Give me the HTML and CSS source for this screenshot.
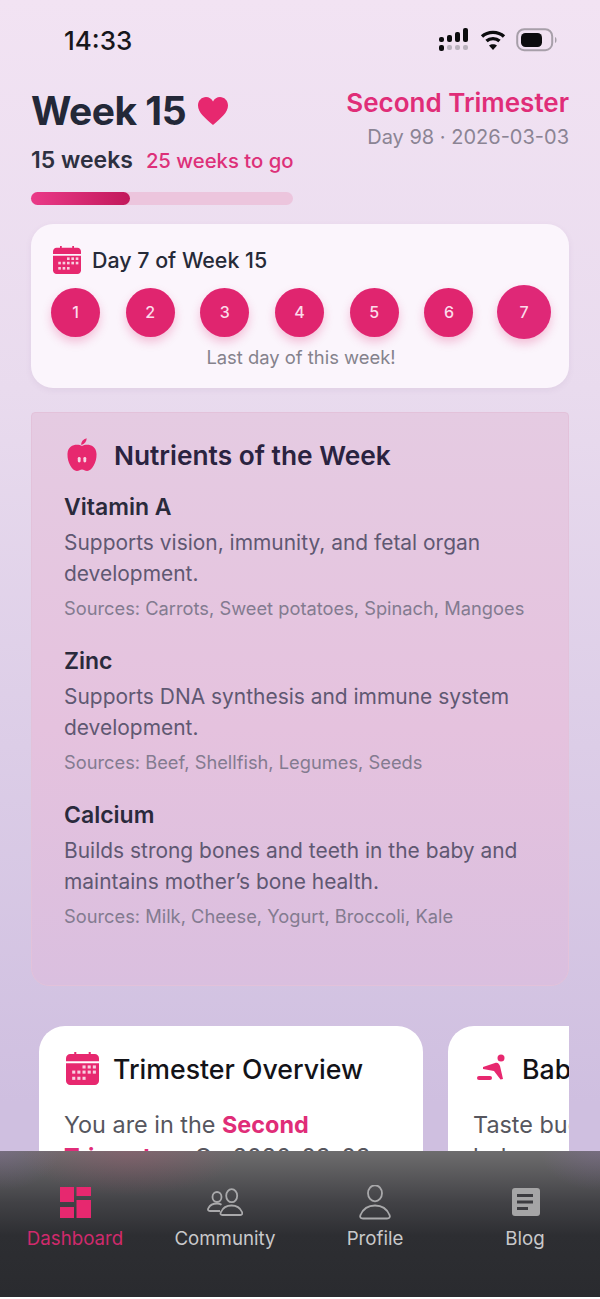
FILE: index.html
```html
<!DOCTYPE html>
<html lang="en">
<head>
    <meta charset="UTF-8">
    <meta name="viewport" content="width=device-width, initial-scale=1.0">
    <title>Dashboard</title>
    <link rel="stylesheet" href="styles.css">
</head>
<body>
    <div class="screen">
        <div class="status-bar">
            <span class="status-time">14:33</span>
            <div class="status-icons">
                <svg width="32" height="24" viewBox="0 0 32 24">
                    <g fill="#0c0c0e">
                        <rect x="1" y="9" width="5" height="5" rx="2"/>
                        <rect x="9" y="7" width="5" height="7" rx="2"/>
                        <rect x="17" y="4" width="5" height="10" rx="2"/>
                        <rect x="25" y="0" width="5" height="14" rx="2"/>
                        <rect x="1" y="17" width="5" height="6" rx="2"/>
                    </g>
                    <g fill="#b9b1bd">
                        <rect x="9" y="17" width="5" height="5" rx="2"/>
                        <rect x="17" y="17" width="5" height="5" rx="2"/>
                        <rect x="25" y="17" width="5" height="5" rx="2"/>
                    </g>
                </svg>
                <svg width="26" height="22" viewBox="0 0 26 22" fill="none" stroke="#0c0c0e" stroke-width="3.4">
                    <path d="M2 7.500C8 2 18 2 24 7.500"/>
                    <path d="M6.500 12C10 8.800 16 8.800 19.500 12"/>
                    <path d="M13 21l-4-4.500c2.200-1.700 5.800-1.700 8 0z" fill="#0c0c0e" stroke="none"/>
                </svg>
                <svg width="42" height="24" viewBox="0 0 42 24" fill="none">
                    <rect x="1.200" y="1.200" width="35" height="21" rx="7" stroke="#a79fa9" stroke-width="2"/>
                    <rect x="5" y="5" width="21" height="14" rx="4.500" fill="#0c0c0e"/>
                    <path d="M39 9c2 .6 2 5.400 0 6z" fill="#a79fa9"/>
                </svg>
            </div>
        </div>

        <main class="content">
            <header class="week-header">
                <div class="week-left">
                    <h1 class="week-title">Week 15
                        <svg class="week-heart" width="32" height="32" viewBox="0 0 32 32">
                            <path d="M16 30C8 23 1 17.500 1 10.500 1 5.500 4.800 2 9 2c3 0 5.500 1.500 7 4.500C17.500 3.500 20 2 23 2c4.200 0 8 3.500 8 8.500C31 17.500 24 23 16 30z" fill="#e7286f"/>
                        </svg>
                    </h1>
                    <div class="week-counts">
                        <span class="weeks-done">15 weeks</span>
                        <span class="weeks-left">25 weeks to go</span>
                    </div>
                    <div class="progress-track">
                        <div class="progress-fill"></div>
                    </div>
                </div>
                <div class="week-right">
                    <div class="trimester-name">Second Trimester</div>
                    <div class="trimester-date">Day 98 · 2026-03-03</div>
                </div>
            </header>

            <section class="day-card">
                <div class="day-heading">
                    <svg class="calendar-icon" width="28" height="28" viewBox="0 0 32 32">
                        <use href="#calendar"/>
                    </svg>
                    <span>Day 7 of Week 15</span>
                </div>
                <div class="day-row">
                    <span class="day-dot">1</span>
                    <span class="day-dot">2</span>
                    <span class="day-dot">3</span>
                    <span class="day-dot">4</span>
                    <span class="day-dot">5</span>
                    <span class="day-dot">6</span>
                    <span class="day-dot day-current">7</span>
                </div>
                <p class="day-note">Last day of this week!</p>
            </section>

            <section class="nutrients-card">
                <div class="nutrients-heading">
                    <svg width="30" height="36" viewBox="0 0 32 38">
                        <path d="M15 8c0-3 2-6 6-7 0 3-2 6-5 7z" fill="#e7286f"/>
                        <path d="M16 9.500C20 7 31 7 31.500 18c.3 9-5 18-10 18-2.500 0-3.500-1.500-5.500-1.500S13 36 10.500 36c-5 0-10.300-9-10-18C1 7 12 7 16 9.500z" fill="#e7286f"/>
                        <rect x="11.500" y="21" width="3" height="6" rx="1.500" fill="#f6d5e4"/>
                        <rect x="17.500" y="21" width="3" height="6" rx="1.500" fill="#f6d5e4"/>
                    </svg>
                    <h2>Nutrients of the Week</h2>
                </div>
                <div class="nutrient">
                    <h3>Vitamin A</h3>
                    <p class="nutrient-desc">Supports vision, immunity, and fetal organ development.</p>
                    <p class="nutrient-src">Sources: Carrots, Sweet potatoes, Spinach, Mangoes</p>
                </div>
                <div class="nutrient">
                    <h3>Zinc</h3>
                    <p class="nutrient-desc">Supports DNA synthesis and immune system development.</p>
                    <p class="nutrient-src">Sources: Beef, Shellfish, Legumes, Seeds</p>
                </div>
                <div class="nutrient">
                    <h3>Calcium</h3>
                    <p class="nutrient-desc">Builds strong bones and teeth in the baby and maintains mother’s bone health.</p>
                    <p class="nutrient-src">Sources: Milk, Cheese, Yogurt, Broccoli, Kale</p>
                </div>
            </section>

            <div class="info-scroller">
                <article class="info-card">
                    <div class="info-heading">
                        <svg width="33" height="33" viewBox="0 0 32 32"><use href="#calendar"/></svg>
                        <h2>Trimester Overview</h2>
                    </div>
                    <p class="info-text">You are in the <strong>Second Trimester</strong>.&nbsp; On 2026-03-03</p>
                </article>
                <article class="info-card">
                    <div class="info-heading">
                        <svg width="33" height="33" viewBox="0 0 33 33">
                            <circle cx="26" cy="6" r="3.500" fill="#e7286f"/>
                            <path d="M8 15l12-4c3-1 4 1 5 3l3 13-2.500.5L19 19 8 17z" fill="#e7286f"/>
                            <rect x="2" y="24" width="15" height="4" rx="2" fill="#e7286f"/>
                        </svg>
                        <h2>Baby Development</h2>
                    </div>
                    <p class="info-text">Taste buds are forming and baby can sense light.</p>
                </article>
            </div>
        </main>

        <nav class="tab-bar">
            <div class="tab tab-active">
                <svg width="36" height="36" viewBox="0 0 36 36" fill="#e7286f">
                    <rect x="3" y="2" width="14" height="15"/>
                    <rect x="3" y="22" width="14" height="11"/>
                    <rect x="19.500" y="2" width="14.500" height="9"/>
                    <rect x="19.500" y="15" width="14.500" height="18"/>
                </svg>
                <span>Dashboard</span>
            </div>
            <div class="tab">
                <svg width="36" height="36" viewBox="0 0 36 36" fill="none" stroke="#a9a9ab" stroke-width="1.800">
                    <ellipse cx="10" cy="12" rx="4.500" ry="5"/>
                    <ellipse cx="24.700" cy="10.700" rx="5.500" ry="6.500"/>
                    <path d="M13 26H3c-2 0-2.500-1.500-1.500-3C3 20 6 18.500 10 18.500c2 0 3.500.5 4.500 1.200"/>
                    <path d="M15.500 30c-2 0-2.500-1.500-1.500-3 2-4.500 6-6.500 10.500-6.500S33 22.500 35 27c.7 1.500 0 3-1.500 3z"/>
                </svg>
                <span>Community</span>
            </div>
            <div class="tab">
                <svg width="36" height="36" viewBox="0 0 36 36" fill="none" stroke="#a9a9ab" stroke-width="1.800">
                    <ellipse cx="18" cy="8.300" rx="7" ry="8"/>
                    <path d="M6 33.500c-2.500 0-3.500-1.500-2.500-3.500C6 24 11.500 20.500 18 20.500S30 24 32.500 30c1 2 0 3.500-2.500 3.500z"/>
                </svg>
                <span>Profile</span>
            </div>
            <div class="tab">
                <svg width="36" height="36" viewBox="0 0 36 36">
                    <rect x="5" y="3" width="28" height="28" rx="3" fill="#a5a5a6"/>
                    <rect x="10" y="9" width="16" height="3" fill="#3c3c40"/>
                    <rect x="10" y="15.500" width="16" height="3" fill="#3c3c40"/>
                    <rect x="10" y="22" width="11" height="3" fill="#3c3c40"/>
                </svg>
                <span>Blog</span>
            </div>
        </nav>
    </div>

    <svg class="icon-defs" width="0" height="0">
        <symbol id="calendar" viewBox="0 0 32 32">
            <path d="M8 0h2v4H8zM22 0h2v4h-2z" fill="#e7286f"/>
            <path d="M4 2h24c2 0 4 2 4 4v3H0V6c0-2 2-4 4-4z" fill="#e7286f"/>
            <path d="M0 11h32v17c0 2-2 4-4 4H4c-2 0-4-2-4-4z" fill="#e7286f"/>
            <g fill="#f8cfe0">
                <rect x="16" y="13" width="3" height="3"/><rect x="21" y="13" width="3" height="3"/><rect x="26" y="13" width="3" height="3"/>
                <rect x="6" y="18" width="3" height="3"/><rect x="11" y="18" width="3" height="3"/><rect x="16" y="18" width="3" height="3"/><rect x="21" y="18" width="3" height="3"/><rect x="26" y="18" width="3" height="3"/>
                <rect x="6" y="24" width="3" height="3"/><rect x="11" y="24" width="3" height="3"/><rect x="16" y="24" width="3" height="3"/>
            </g>
        </symbol>
    </svg>
</body>
</html>
```

FILE: styles.css
```css
* {
    box-sizing: border-box;
}
html, body {
    margin: 0;
    height: 100%;
}
body {
    font-family: Inter, "Liberation Sans", sans-serif;
    background-color: #fff;
    overflow: hidden;
}
h1, h2, h3, p {
    margin: 0;
}
.icon-defs {
    position: absolute;
}
.screen {
    display: flex;
    flex-direction: column;
    height: 1297px;
    background: linear-gradient(#f2e3f3, #e9dbee 30%, #cfbfe0 85%);
}

/* status bar */
.status-bar {
    display: flex;
    justify-content: space-between;
    align-items: center;
    height: 80px;
    padding: 0 42px 0 64px;
    flex-shrink: 0;
}
.status-time {
    font-size: 26px;
    font-weight: 500;
    color: #17171b;
}
.status-icons {
    display: flex;
    align-items: center;
    gap: 10px;
}

/* main content */
.content {
    flex: 1;
    min-height: 0;
    overflow: hidden;
    padding: 0 31px;
}
.week-header {
    display: flex;
    justify-content: space-between;
    height: 144px;
}
.week-left {
    width: 262px;
}
.week-title {
    display: flex;
    align-items: center;
    gap: 11px;
    margin-top: 9px;
    font-size: 39px;
    line-height: 44px;
    font-weight: 700;
    letter-spacing: -0.5px;
    color: #232838;
}
.week-counts {
    display: flex;
    align-items: baseline;
    gap: 13px;
    margin-top: 13px;
    white-space: nowrap;
}
.weeks-done {
    font-size: 23px;
    font-weight: 600;
    color: #2d3040;
}
.weeks-left {
    font-size: 20.3px;
    font-weight: 500;
    color: #dd3079;
}
.progress-track {
    height: 13px;
    margin-top: 18px;
    border-radius: 7px;
    background-color: #ecc5dd;
}
.progress-fill {
    width: 99px;
    height: 100%;
    border-radius: 7px;
    background: linear-gradient(90deg, #ea3a88, #c2185b);
}
.week-right {
    text-align: right;
}
.trimester-name {
    margin-top: 7px;
    font-size: 26px;
    font-weight: 600;
    color: #e02d78;
}
.trimester-date {
    margin-top: 7px;
    font-size: 20px;
    color: #8b8494;
}

/* day card */
.day-card {
    height: 164px;
    padding: 22px 18px 0 20px;
    border-radius: 22px;
    background-color: #fbf5fc;
    box-shadow: 0 2px 6px rgba(120, 80, 130, 0.08);
}
.day-heading {
    display: flex;
    align-items: center;
    gap: 11px;
    font-size: 21.4px;
    font-weight: 500;
    color: #262a38;
}
.calendar-icon {
    margin-left: 2px;
}
.day-row {
    display: flex;
    align-items: center;
    gap: 25.7px;
    margin-top: 11px;
}
.day-dot {
    display: flex;
    align-items: center;
    justify-content: center;
    flex-shrink: 0;
    width: 49px;
    height: 49px;
    border-radius: 50%;
    background-color: #e0256f;
    box-shadow: 0 5px 10px rgba(224, 37, 111, 0.25);
    color: #fbdcea;
    font-size: 16px;
    font-weight: 500;
}
.day-current {
    width: 54px;
    height: 54px;
    margin-left: -2px;
    background-color: #df2877;
}
.day-note {
    margin-top: 7px;
    text-align: center;
    font-size: 18.4px;
    color: #85828c;
}

/* nutrients */
.nutrients-card {
    height: 574px;
    margin-top: 24px;
    padding: 24px 32px 0 32px;
    border: 1px solid #e3c2da;
    border-radius: 4px 4px 18px 18px;
    background: linear-gradient(#e5cbe2, #e5c2de 55%, #dabfdf);
}
.nutrients-heading {
    display: flex;
    align-items: center;
    gap: 17px;
    margin: 0 0 20px 3px;
}
.nutrients-heading h2 {
    font-size: 26.3px;
    font-weight: 600;
    color: #2a2340;
}
.nutrient {
    margin-bottom: 25.8px;
}
.nutrient h3 {
    font-size: 23px;
    line-height: 28px;
    font-weight: 600;
    color: #2a2a3c;
}
.nutrient-desc {
    margin-top: 6px;
    font-size: 20.95px;
    line-height: 31px;
    color: #5f5872;
}
.nutrient-src {
    margin-top: 6px;
    font-size: 18.3px;
    line-height: 26px;
    color: #837b90;
}

/* overview cards */
.info-scroller {
    display: flex;
    gap: 25px;
    margin-top: 40px;
    padding-left: 8px;
    overflow: hidden;
}
.info-card {
    flex: 0 0 384px;
    height: 260px;
    padding: 26px 25px;
    border-radius: 26px;
    background-color: #fff;
}
.info-heading {
    display: flex;
    align-items: center;
    gap: 14px;
    margin-left: 2px;
}
.info-heading h2 {
    font-size: 26.7px;
    font-weight: 500;
    color: #131318;
    white-space: nowrap;
}
.info-text {
    margin-top: 24px;
    font-size: 23.4px;
    line-height: 32px;
    color: #56565e;
}
.info-text strong {
    color: #e02d78;
    font-weight: 700;
}

/* bottom tabs */
.tab-bar {
    display: grid;
    grid-template-columns: repeat(4, 150px);
    flex-shrink: 0;
    height: 146px;
    padding-top: 34px;
    background:
        radial-gradient(ellipse 110px 45px at 130px 0, rgba(200, 70, 110, 0.22), transparent),
        radial-gradient(ellipse 60px 40px at 0 0, rgba(150, 110, 190, 0.22), transparent),
        radial-gradient(ellipse 60px 40px at 100% 0, rgba(150, 110, 190, 0.22), transparent),
        linear-gradient(#6e6d6e, #424246 35%, #2d2e32 58%, #2a2b2f);
}
.tab {
    display: flex;
    flex-direction: column;
    align-items: center;
    gap: 6px;
    font-size: 18.7px;
    line-height: 23px;
    color: #c9c9cb;
}
.tab-active {
    color: #cf2a6c;
}
```
